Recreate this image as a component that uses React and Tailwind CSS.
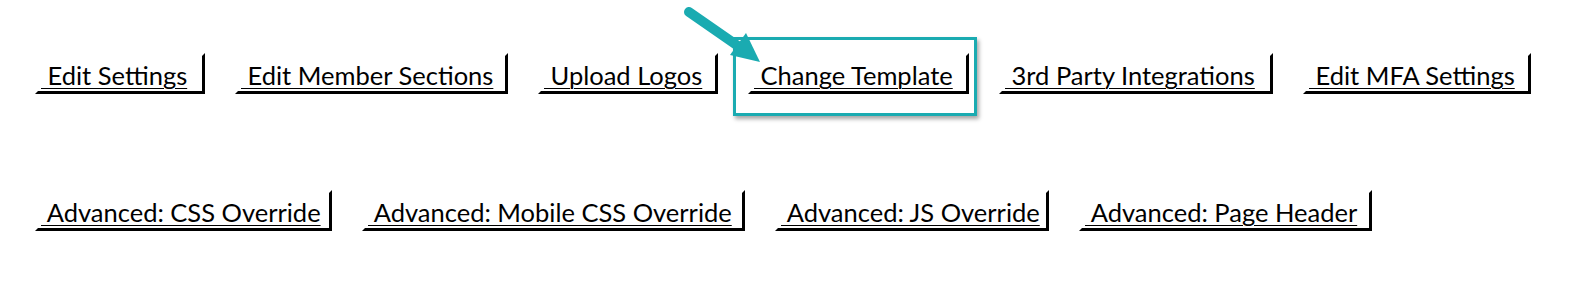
const rowOne = [
  { label: "Edit Settings", w: "w-[170px]" },
  { label: "Edit Member Sections", w: "w-[273px]" },
  { label: "Upload Logos", w: "w-[180px]" },
  { label: "Change Template", w: "w-[221px]" },
  { label: "3rd Party Integrations", w: "w-[274px]" },
  { label: "Edit MFA Settings", w: "w-[228px]" },
];

const rowTwo = [
  { label: "Advanced: CSS Override", w: "w-[297px]" },
  { label: "Advanced: Mobile CSS Override", w: "w-[383px]" },
  { label: "Advanced: JS Override", w: "w-[274px]" },
  { label: "Advanced: Page Header", w: "w-[293px]" },
];

const NavButton = ({ label, w }) => (
  <a
    href="#"
    className={`${w} shrink-0 inline-block whitespace-nowrap border-t-[3px] border-l-[3px] border-r-[3px] border-b-[3px] border-t-transparent border-l-transparent border-r-black border-b-black pl-[3px] pt-[3px] text-[25.5px] leading-[32px] text-black underline decoration-1 underline-offset-[3px]`}
  >
    {"\u00a0" + label}
  </a>
);

export default function App() {
  return (
    <div
      className="relative w-[1569px] h-[281px] bg-white overflow-hidden"
      style={{ fontFamily: "Lato, 'Noto Sans', sans-serif" }}
    >
      <div className="flex flex-col gap-[96px] pl-[35px] pt-[53px]">
        <div className="flex gap-[30px]">
          {rowOne.map((b) => (
            <NavButton key={b.label} {...b} />
          ))}
        </div>
        <div className="flex gap-[30px]">
          {rowTwo.map((b) => (
            <NavButton key={b.label} {...b} />
          ))}
        </div>
      </div>

      {/* highlight box */}
      <div className="absolute left-[733px] top-[37px] w-[244px] h-[79px] border-[3px] border-[#1aabb1] shadow-[2px_3px_4px_rgba(0,0,0,0.35)]" />

      {/* arrow */}
      <svg
        className="absolute left-0 top-0"
        width="800"
        height="100"
        viewBox="0 0 800 100"
      >
        <line
          x1="689"
          y1="12"
          x2="738"
          y2="46"
          stroke="#1aabb1"
          strokeWidth="10"
          strokeLinecap="round"
        />
        <polygon points="760,62 730,55 746,33" fill="#1aabb1" />
      </svg>
    </div>
  );
}
